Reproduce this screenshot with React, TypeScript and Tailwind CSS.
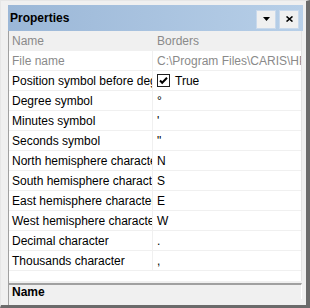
const rows: { label: string; value: string; check?: boolean }[] = [
  { label: "Position symbol before degrees", value: "True", check: true },
  { label: "Degree symbol", value: "°" },
  { label: "Minutes symbol", value: "'" },
  { label: "Seconds symbol", value: '"' },
  { label: "North hemisphere character", value: "N" },
  { label: "South hemisphere character", value: "S" },
  { label: "East hemisphere character", value: "E" },
  { label: "West hemisphere character", value: "W" },
  { label: "Decimal character", value: "." },
  { label: "Thousands character", value: "," },
];

function CheckBox() {
  return (
    <svg width="13" height="13" viewBox="0 0 13 13" className="shrink-0">
      <rect x="0.5" y="0.5" width="12" height="12" fill="#fff" stroke="#1e1e1e" />
      <path d="M3 6.5 L5.2 8.8 L10 3.8" fill="none" stroke="#000" strokeWidth="2" />
    </svg>
  );
}

export default function App() {
  return (
    <div
      className="w-[310px] h-[308px] bg-[#f0f0f0] border-t border-l border-[#e6e6e6] border-r-4 border-r-[#6b6b6b] border-b-[3px] border-b-[#6b6b6b] flex flex-col pl-[7px] pr-[3px] pt-[4px] overflow-hidden"
      style={{ fontFamily: '"Liberation Sans", Arial, sans-serif' }}
    >
      <div className="h-[26px] shrink-0 flex items-center bg-gradient-to-r from-[#9bb7d7] to-[#b7cfe8] pl-[2px] pr-[4px]">
        <span className="text-[12px] font-bold text-black">Properties</span>
        <div className="ml-auto flex gap-[3px] pt-[2px]">
          <div className="w-[20px] h-[19px] bg-[#f0f0f0] border border-[#c9d9ec] flex items-center justify-center">
            <svg width="7" height="4" viewBox="0 0 7 4">
              <path d="M0 0 H7 L3.5 4 Z" fill="#000" />
            </svg>
          </div>
          <div className="w-[20px] h-[19px] bg-[#f0f0f0] border border-[#c9d9ec] flex items-center justify-center">
            <svg width="7" height="6" viewBox="0 0 7 6">
              <path d="M0.5 0.5 L6.5 5.5 M6.5 0.5 L0.5 5.5" stroke="#000" strokeWidth="1.6" />
            </svg>
          </div>
        </div>
      </div>

      <div className="flex-1 flex flex-col border-l border-[#a0a0a0] mr-[1px]">
        <div className="flex flex-col bg-white border-r border-[#e3e3e3] text-[12px] leading-[20px]">
          <div className="flex h-[20px] bg-[#f0f0f0] text-[#8a8a8a] border-b border-[#f0f0f0]">
            <div className="w-[144px] pl-[3px] truncate border-r border-[#f0f0f0] overflow-hidden whitespace-nowrap">Name</div>
            <div className="flex-1 pl-[4px] overflow-hidden whitespace-nowrap">Borders</div>
          </div>
          <div className="flex h-[20px] text-[#8a8a8a] border-b border-[#f0f0f0]">
            <div className="w-[144px] pl-[3px] border-r border-[#f0f0f0] overflow-hidden whitespace-nowrap">File name</div>
            <div className="flex-1 pl-[4px] overflow-hidden whitespace-nowrap">C:\Program Files\CARIS\HPD\Borders</div>
          </div>
          {rows.map((r) => (
            <div key={r.label} className="flex h-[20px] text-black border-b border-[#f0f0f0]">
              <div className="w-[144px] pl-[3px] border-r border-[#f0f0f0] overflow-hidden whitespace-nowrap">{r.label}</div>
              <div className="flex-1 pl-[4px] overflow-hidden whitespace-nowrap flex items-center gap-[5px]">
                {r.check && <CheckBox />}
                <span>{r.value}</span>
              </div>
            </div>
          ))}
          <div className="h-[10px]" />
        </div>
        <div className="h-[2px]" />
        <div className="h-[16px] border-t-2 border-[#a0a0a0] border-r border-r-white bg-[#f0f0f0] pl-[3px] text-[12px] font-bold leading-[14px] overflow-hidden">
          Name
        </div>
      </div>
    </div>
  );
}
